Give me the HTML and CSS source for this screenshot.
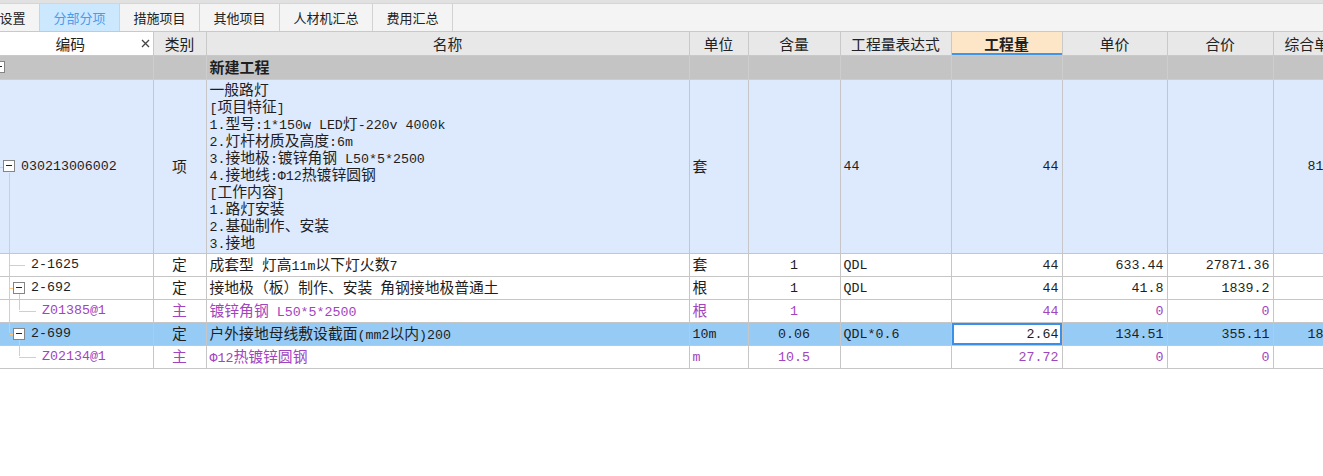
FILE: index.html
```html
<!DOCTYPE html>
<html lang="zh-CN">
<head>
<meta charset="utf-8">
<title>分部分项</title>
<link rel="stylesheet" href="styles.css">
</head>
<body>
<div class="topbar"></div>
<div class="tabs">
  <div class="tab">设置</div>
  <div class="tab active">分部分项</div>
  <div class="tab">措施项目</div>
  <div class="tab">其他项目</div>
  <div class="tab">人材机汇总</div>
  <div class="tab">费用汇总</div>
</div>
<table class="grid">
  <colgroup>
    <col class="c-code"><col class="c-type"><col class="c-name"><col class="c-unit"><col class="c-qty"><col class="c-expr"><col class="c-amt"><col class="c-price"><col class="c-total"><col class="c-comp"><col class="c-more">
  </colgroup>
  <thead>
    <tr>
      <th class="h-code"><div class="codehead"><span class="codelabel">编码</span><svg class="xicon" width="9" height="9" viewBox="0 0 9 9"><path d="M1 1L8 8M8 1L1 8" stroke="#444" stroke-width="1.3" fill="none"/></svg></div></th>
      <th>类别</th>
      <th>名称</th>
      <th>单位</th>
      <th>含量</th>
      <th>工程量表达式</th>
      <th class="h-active">工程量</th>
      <th>单价</th>
      <th>合价</th>
      <th class="h-left">综合单价</th>
      <th></th>
    </tr>
  </thead>
  <tbody>
    <tr class="r-group">
      <td class="code"><span class="tg tg-clip"></span></td>
      <td></td>
      <td class="name bold">新建工程</td>
      <td></td><td></td><td></td><td></td><td></td><td></td><td></td><td></td>
    </tr>
    <tr class="r-item">
      <td class="code lv0"><span class="ln hl-a"></span><span class="ln vl-a-down"></span><span class="tg"></span><span class="cv">030213006002</span></td>
      <td class="ctr"><span class="k">项</span></td>
      <td class="name multi"><div><span class="k">一般路灯</span></div><div>[<span class="k">项目特征</span>]</div><div>1.<span class="k">型号</span>:1*150w LED<span class="k">灯</span>-220v 4000k</div><div>2.<span class="k">灯杆材质及高度</span>:6m</div><div>3.<span class="k">接地极</span>:<span class="k">镀锌角钢</span> L50*5*2500</div><div>4.<span class="k">接地线</span>:Φ12<span class="k">热镀锌圆钢</span></div><div>[<span class="k">工作内容</span>]</div><div>1.<span class="k">路灯安装</span></div><div>2.<span class="k">基础制作、安装</span></div><div>3.<span class="k">接地</span></div></td>
      <td class="lft"><span class="k">套</span></td>
      <td class="ctr"></td>
      <td class="lft">44</td>
      <td class="rgt">44</td>
      <td class="rgt"></td>
      <td class="rgt"></td>
      <td class="rgt">81.56</td>
      <td></td>
    </tr>
    <tr class="r">
      <td class="code lv1"><span class="ln vl-a"></span><span class="ln hl-b"></span><span class="cv">2-1625</span></td>
      <td class="ctr"><span class="k">定</span></td>
      <td class="name"><span class="k">成套型</span> <span class="k">灯高</span>11m<span class="k">以下灯火数</span>7</td>
      <td class="lft"><span class="k">套</span></td>
      <td class="ctr">1</td>
      <td class="lft">QDL</td>
      <td class="rgt">44</td>
      <td class="rgt">633.44</td>
      <td class="rgt">27871.36</td>
      <td class="rgt"></td>
      <td></td>
    </tr>
    <tr class="r">
      <td class="code lv1b"><span class="ln vl-a"></span><span class="ln hl-c"></span><span class="ln vl-b-down"></span><span class="tg"></span><span class="cv">2-692</span></td>
      <td class="ctr"><span class="k">定</span></td>
      <td class="name"><span class="k">接地极（板）制作、安装</span> <span class="k">角钢接地极普通土</span></td>
      <td class="lft"><span class="k">根</span></td>
      <td class="ctr">1</td>
      <td class="lft">QDL</td>
      <td class="rgt">44</td>
      <td class="rgt">41.8</td>
      <td class="rgt">1839.2</td>
      <td class="rgt"></td>
      <td></td>
    </tr>
    <tr class="r main">
      <td class="code lv2"><span class="ln vl-a"></span><span class="ln vl-b-up"></span><span class="ln hl-d"></span><span class="cv">Z01385@1</span></td>
      <td class="ctr"><span class="k">主</span></td>
      <td class="name"><span class="k">镀锌角钢</span> L50*5*2500</td>
      <td class="lft"><span class="k">根</span></td>
      <td class="ctr">1</td>
      <td class="lft"></td>
      <td class="rgt">44</td>
      <td class="rgt">0</td>
      <td class="rgt">0</td>
      <td class="rgt"></td>
      <td></td>
    </tr>
    <tr class="r sel">
      <td class="code lv1b"><span class="ln vl-a-up"></span><span class="ln hl-c"></span><span class="ln vl-b-down"></span><span class="tg"></span><span class="cv">2-699</span></td>
      <td class="ctr"><span class="k">定</span></td>
      <td class="name"><span class="k">户外接地母线敷设截面</span>(mm2<span class="k">以内</span>)200</td>
      <td class="lft">10m</td>
      <td class="ctr">0.06</td>
      <td class="lft">QDL*0.6</td>
      <td class="rgt focus">2.64</td>
      <td class="rgt">134.51</td>
      <td class="rgt">355.11</td>
      <td class="rgt">18.08</td>
      <td></td>
    </tr>
    <tr class="r main">
      <td class="code lv2"><span class="ln vl-b-up"></span><span class="ln hl-d"></span><span class="cv">Z02134@1</span></td>
      <td class="ctr"><span class="k">主</span></td>
      <td class="name">Φ12<span class="k">热镀锌圆钢</span></td>
      <td class="lft">m</td>
      <td class="ctr">10.5</td>
      <td class="lft"></td>
      <td class="rgt">27.72</td>
      <td class="rgt">0</td>
      <td class="rgt">0</td>
      <td class="rgt"></td>
      <td></td>
    </tr>
  </tbody>
</table>
</body>
</html>
```
FILE: styles.css
```css
html, body {
  margin: 0;
  padding: 0;
  background: #ffffff;
  overflow: hidden;
}
body {
  font-family: "Liberation Mono", "Noto Sans CJK SC", monospace;
  font-size: 13.3px;
  color: #1e1e1e;
}
.k {
  font-family: "Noto Sans CJK SC", sans-serif;
  font-size: 14.8px;
  line-height: 17px;
}
.topbar {
  height: 3px;
  background: #e1e1e1;
}
.tabs {
  display: flex;
  height: 27px;
  margin-left: -14px;
  background: #f4f4f4;
  border-top: 1px solid #d5d5d5;
  font-family: "Noto Sans CJK SC", sans-serif;
  font-size: 13px;
}
.tab {
  display: flex;
  align-items: center;
  padding: 0 13.5px;
  border-right: 1px solid #d2d2d2;
  color: #222;
}
.tab.active {
  background: #cce8ff;
  color: #4c9be9;
}
.grid {
  border-collapse: collapse;
  table-layout: fixed;
  width: 1471px;
}
.c-code { width: 153px; }
.c-type { width: 53px; }
.c-name { width: 483px; }
.c-unit { width: 59px; }
.c-qty { width: 92px; }
.c-expr { width: 111px; }
.c-amt { width: 111px; }
.c-price { width: 105px; }
.c-total { width: 106px; }
.c-comp { width: 78px; }
.c-more { width: 120px; }

.grid th {
  height: 23px;
  padding: 0;
  background: #e8e8e8;
  border: 1px solid #c9c9c9;
  font-family: "Noto Sans CJK SC", sans-serif;
  font-weight: normal;
  font-size: 14.8px;
  line-height: 17px;
  color: #222;
  text-align: center;
  white-space: nowrap;
  overflow: hidden;
}
.grid th:first-child { border-left: none; }
.grid th.h-code { background: #ffffff; }
.codehead {
  display: flex;
  align-items: center;
  padding-right: 3px;
}
.codelabel {
  flex: 1;
  text-align: center;
}
.xicon { display: block; }
.grid th.h-active {
  background: #fde6c8;
  font-weight: bold;
  box-shadow: inset 0 -2px 0 #3f94ee;
}
.grid th.h-left { text-align: left; padding-left: 11px; }

.grid td {
  height: 22px;
  padding: 0 3px;
  border: 1px solid #c6c6c6;
  line-height: 17px;
  white-space: nowrap;
  overflow: hidden;
  vertical-align: middle;
}
.grid td:first-child { border-left: none; }
.ctr { text-align: center; }
.lft { text-align: left; }
.rgt { text-align: right; }
.grid td.name { padding-left: 3px; }

.r-group td {
  height: 23px;
  background: #c4c4c4;
  border-color: #cdcdcd;
  border-top-color: #c4c4c4;
}
.r-group td.bold {
  height: 21px;
  padding-bottom: 2px;
  font-family: "Noto Sans CJK SC", sans-serif;
  font-weight: bold;
  font-size: 15px;
}
.r-item td {
  height: 173px;
  background: #dde9fc;
  border-top-color: #dde9fc;
}
.r-item td.multi {
  vertical-align: top;
  padding-top: 0;
}
.multi div { height: 17px; }
.main td { color: #a244be; }
.sel td { background: #96cbf6; }
.sel td.focus {
  background: #ffffff;
  box-shadow: inset 0 0 0 2px #3b8fe8;
}

/* tree column */
.grid td.code {
  position: relative;
  padding: 0;
}
.code .cv { vertical-align: middle; }
.lv0 { padding-left: 3px !important; }
.lv1 { padding-left: 31px !important; }
.lv1b { padding-left: 13px !important; }
.lv2 { padding-left: 42px !important; }
.tg {
  display: inline-block;
  vertical-align: middle;
  position: relative;
  width: 10px;
  height: 10px;
  margin-right: 6px;
  border: 1px solid #858585;
  background: #ffffff;
}
.tg::after {
  content: "";
  position: absolute;
  left: 2px;
  top: 4px;
  width: 6px;
  height: 1px;
  background: #222;
}
.tg-clip { margin-left: -7px; }
.ln {
  position: absolute;
  background: #fcc684;
}
.hl-a { left: 0; width: 3px; top: 50%; height: 1px; }
.vl-a-down { left: 9px; width: 1px; top: calc(50% + 6px); bottom: -1px; }
.vl-a { left: 9px; width: 1px; top: -1px; bottom: -1px; }
.vl-a-up { left: 9px; width: 1px; top: -1px; height: 50%; }
.hl-b { left: 10px; width: 15px; top: 50%; height: 1px; }
.hl-c { left: 10px; width: 3px; top: 50%; height: 1px; }
.vl-b-down { left: 19px; width: 1px; top: calc(50% + 6px); bottom: -1px; }
.vl-b-up { left: 19px; width: 1px; top: -1px; height: 50%; }
.hl-d { left: 19px; width: 17px; top: 50%; height: 1px; }
```
